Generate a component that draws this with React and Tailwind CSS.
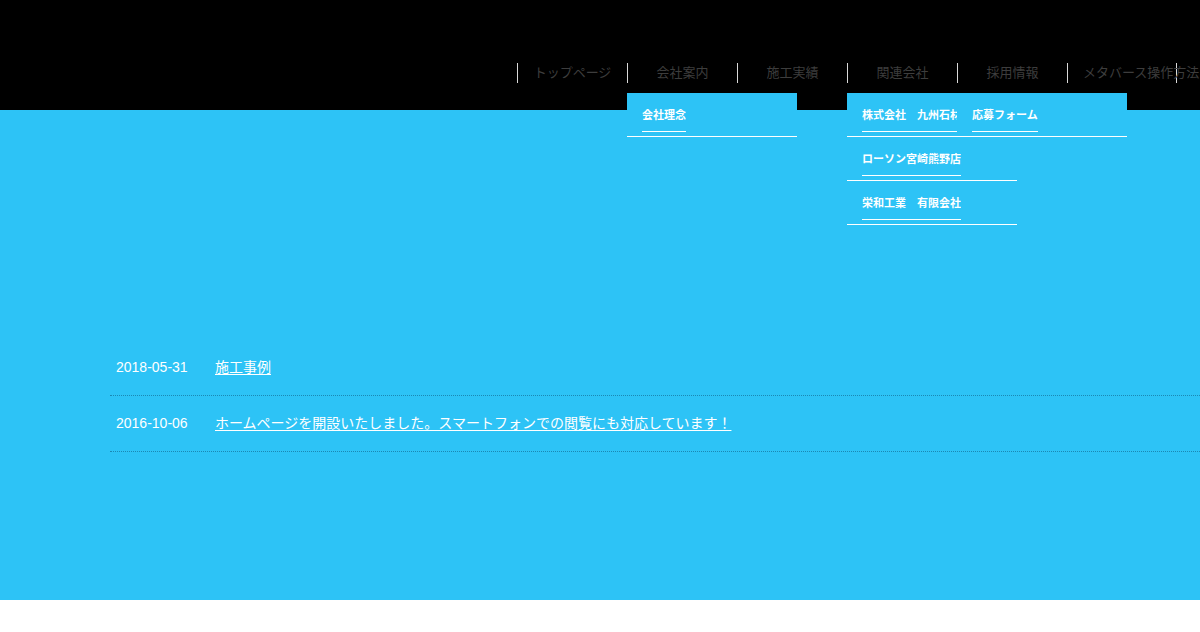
const menu = [
    { label: 'トップページ' },
    { label: '会社案内', children: ['会社理念'] },
    { label: '施工実績' },
    {
        label: '関連会社',
        children: ['株式会社　九州石材', 'ローソン宮崎熊野店', '栄和工業　有限会社'],
    },
    { label: '採用情報', children: ['応募フォーム'] },
    { label: 'メタバース操作方法' },
];

const news = [
    { date: '2018-05-31', title: '施工事例' },
    {
        date: '2016-10-06',
        title: 'ホームページを開設いたしました。スマートフォンでの閲覧にも対応しています！',
    },
];

export default function App() {
    return (
        <div
            className="min-h-[632px] bg-white"
            style={{ fontFamily: '"Liberation Sans", "Noto Sans CJK JP", sans-serif' }}
        >
            <header className="h-[110px] bg-black pt-[63px]">
                <ul className="ml-[517px] flex w-[660px]">
                    {menu.map((item, i) => (
                        <li
                            key={item.label}
                            className={`relative h-[20px] w-[110px] shrink-0 border-l border-[#d9d9d9] px-[15px] text-center text-[13px] leading-[20px] whitespace-nowrap text-[#3d3d3d] ${
                                i === menu.length - 1 ? 'border-r' : ''
                            }`}
                        >
                            <a href="#">{item.label}</a>
                            {item.children && (
                                <ul className="absolute top-[30px] left-[-1px] z-10 w-[170px] bg-[#2dc3f6] text-left">
                                    {item.children.map((child) => (
                                        <li
                                            key={child}
                                            className="box-border h-[44px] overflow-hidden border-b border-white px-[15px] pt-[14px]"
                                        >
                                            <a
                                                href="#"
                                                className="inline-block max-w-[140px] overflow-hidden border-b border-white pb-[8px] text-[11px] leading-[16px] font-bold text-white"
                                            >
                                                {child}
                                            </a>
                                        </li>
                                    ))}
                                </ul>
                            )}
                        </li>
                    ))}
                </ul>
            </header>

            <main className="h-[490px] overflow-hidden bg-[#2dc3f6] pt-[230px]">
                <dl className="ml-[110px]">
                    {news.map((row) => (
                        <div
                            key={row.date}
                            className="flex border-b border-dotted border-[#1b88b3] pt-[18px] pb-[19px] pl-[6px] text-[14px] leading-[18px] whitespace-nowrap text-white"
                        >
                            <dt className="w-[99px] shrink-0">{row.date}</dt>
                            <dd>
                                <a href="#" className="underline underline-offset-2">
                                    {row.title}
                                </a>
                            </dd>
                        </div>
                    ))}
                </dl>
            </main>
        </div>
    );
}
